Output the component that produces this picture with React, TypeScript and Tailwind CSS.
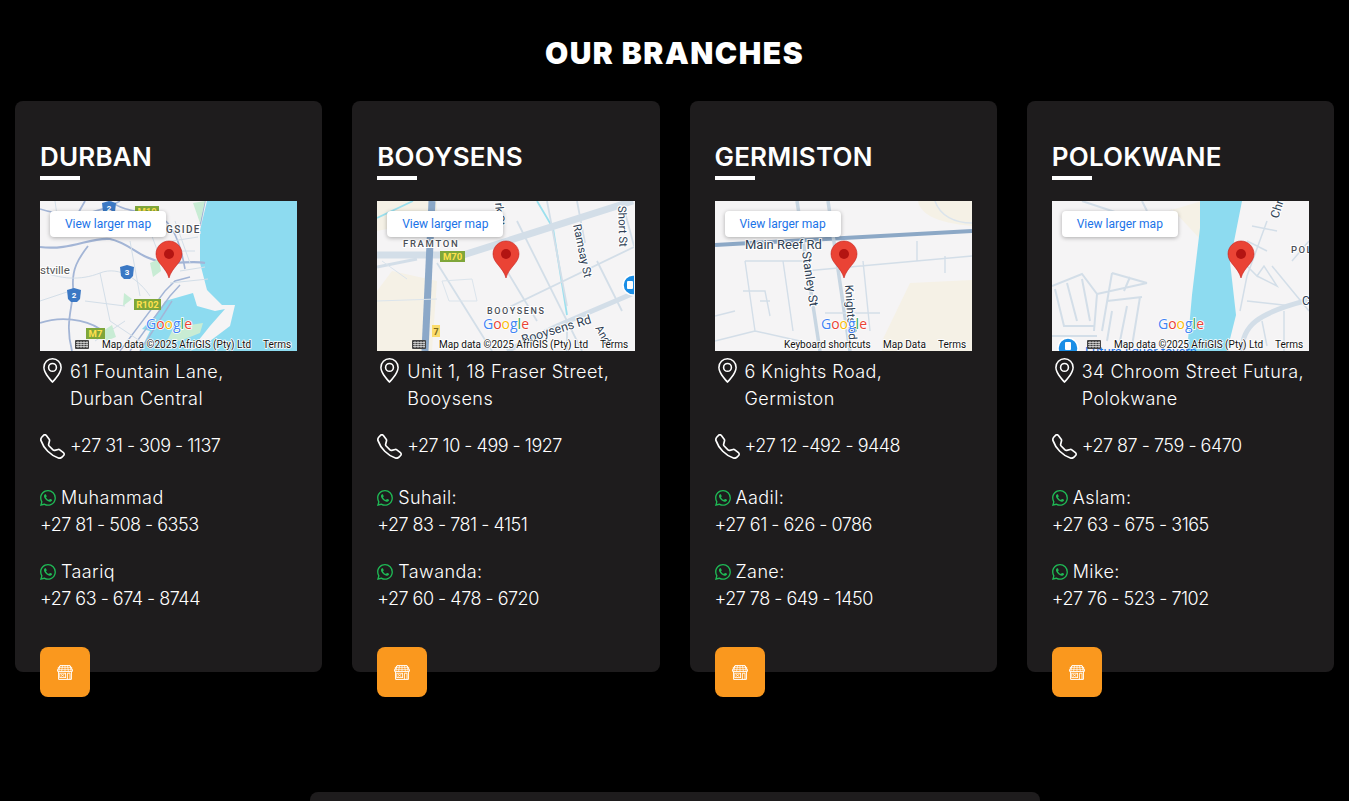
import React from 'react';
import { BsGeoAlt, BsTelephone, BsWhatsapp } from 'react-icons/bs';

const ROAD = '#a3b5d6';
const MINOR = '#d3dee8';
const WATER = '#8ddbf0';
const LAND = '#f5f4f5';
const TAN = '#f5f1e6';

const Label = ({ x, y, size = 10, fill = '#4a4f57', rotate, spacing, weight = 400, children }: any) => (
  <text
    x={x}
    y={y}
    fontSize={size}
    fill={fill}
    fontFamily="Roboto, sans-serif"
    fontWeight={weight}
    letterSpacing={spacing}
    stroke="#ffffff"
    strokeWidth={2}
    paintOrder="stroke"
    transform={rotate ? `rotate(${rotate} ${x} ${y})` : undefined}
  >
    {children}
  </text>
);

const Shield = ({ x, y, w, label, bg = '#7fa63a', fg = '#ffe14d' }: any) => (
  <g>
    <rect x={x} y={y} width={w} height={11} fill={bg} />
    <text x={x + w / 2} y={y + 9} fontSize={9.5} fontWeight={700} textAnchor="middle" fill={fg} fontFamily="Roboto, sans-serif">
      {label}
    </text>
  </g>
);

const RouteBadge = ({ x, y, label }: any) => (
  <g>
    <path d={`M${x - 7} ${y - 5}L${x} ${y - 7}L${x + 7} ${y - 5}L${x + 6} ${y + 4}L${x + 3} ${y + 7}H${x - 3}L${x - 6} ${y + 4}Z`} fill="#3b78c4" />
    <text x={x} y={y + 3} fontSize={8} fontWeight={700} textAnchor="middle" fill="#fff" fontFamily="Roboto, sans-serif">
      {label}
    </text>
  </g>
);

const Pin = ({ x }: { x: number }) => (
  <g transform={`translate(${x - 13} 40)`}>
    <path d="M13 0C5.8 0 0 5.8 0 13C0 22 10 26 13 37C16 26 26 22 26 13C26 5.8 20.2 0 13 0Z" fill="#ea4335" stroke="#c5221f" strokeWidth="0.6" />
    <circle cx="13" cy="13" r="5" fill="#b31412" />
  </g>
);

const GoogleMark = ({ x }: { x: number }) => (
  <text x={x} y={128} fontSize={14} fontWeight={500} textAnchor="middle" fontFamily="'Open Sans', sans-serif" stroke="#ffffff" strokeWidth={1.5} paintOrder="stroke">
    <tspan fill="#4285f4">G</tspan>
    <tspan fill="#ea4335">o</tspan>
    <tspan fill="#fbbc05">o</tspan>
    <tspan fill="#4285f4">g</tspan>
    <tspan fill="#34a853">l</tspan>
    <tspan fill="#ea4335">e</tspan>
  </text>
);

const Keyboard = () => (
  <g>
    <rect x="35" y="139" width="14" height="9" rx="1" fill="#444" />
    <path d="M36 141.5H48M36 143.5H48M36 145.5H48M38 140V147M41 140V147M44 140V147M47 140V147" stroke="#fff" strokeWidth="0.6" />
  </g>
);

const Attribution = ({ variant = 'data' }: { variant?: 'data' | 'short' }) => {
  const small = { fontSize: 10, fill: '#111', fontFamily: 'Roboto, sans-serif', stroke: '#ffffff', strokeWidth: 1.5, paintOrder: 'stroke' } as any;
  if (variant === 'short') {
    return (
      <g>
        <text x="69" y="147" {...small}>Keyboard shortcuts</text>
        <text x="168" y="147" {...small}>Map Data</text>
        <text x="223" y="147" {...small}>Terms</text>
      </g>
    );
  }
  return (
    <g>
      <Keyboard />
      <text x="62" y="147" {...small}>Map data ©2025 AfriGIS (Pty) Ltd</text>
      <text x="223" y="147" {...small}>Terms</text>
    </g>
  );
};

const DurbanMap = () => (
  <>
    <path d="M167 0L160 29L160 62L167 89L182 104L195 104L190 125L170 140L150 150H257V0Z" fill={WATER} />
    <path d="M125 100L153 92L157 105L175 110L185 108L170 125L150 150H100L110 130L102 128L118 112Z" fill={WATER} />
    <path d="M133 128L150 124L163 122L160 132L140 140L128 138Z" fill="#c8ecd4" />
    <path d="M70 0C85 12 105 10 120 16C132 22 140 40 145 68M0 8C30 18 60 12 80 0" fill="none" stroke={ROAD} strokeWidth="1.6" />
    <path d="M0 46C30 50 50 36 70 38C90 42 100 58 125 62C145 62 155 60 165 62" fill="none" stroke={ROAD} strokeWidth="2.2" />
    <path d="M45 0L28 30M48 45C38 58 32 68 33 85C34 105 24 120 32 150M0 122C20 115 45 118 60 128" fill="none" stroke={ROAD} strokeWidth="1.8" />
    <path d="M80 150L125 90L135 80L150 76M90 150L130 95L140 84M100 150L132 100M165 0L160 25" fill="none" stroke={ROAD} strokeWidth="1.4" />
    <path d="M0 70C20 78 40 80 60 72C80 64 100 80 110 95M60 72L70 120L100 140M15 0L20 36M90 40L100 95M110 30L125 70M135 20L150 62M140 70L165 66M130 82L168 78M0 100L30 90M45 100L85 105M55 140L85 120M132 40L158 36M128 50L155 50" fill="none" stroke={MINOR} strokeWidth="1" />
    <path d="M153 2L165 0L160 22ZM110 62L119 58L121 70L113 76ZM84 92L92 98L83 105ZM63 130L72 124L76 136L66 140Z" fill="#c8ecd4" />
    <Shield x={95} y={5} w={24} label="M19" />
    <RouteBadge x={69} y={7} label="2" />
    <RouteBadge x={87} y={71} label="3" />
    <RouteBadge x={34} y={94} label="2" />
    <Shield x={94} y={98} w={27} label="R102" />
    <Shield x={46} y={127} w={19} label="M7" />
    <Label x={126} y={32} size={10} spacing={1.4} weight={500}>GSIDE</Label>
    <Label x={0} y={73} size={11.5} fill="#555">stville</Label>
    <GoogleMark x={129} />
    <Attribution />
  </>
);

const BooysensMap = () => (
  <>
    <path d="M0 0H60V18L0 30Z" fill={TAN} />
    <path d="M0 90L15 70L60 80L55 150H0Z" fill={TAN} />
    <path d="M0 17L36 0M160 0L176 27L190 114" fill="none" stroke="#9be0ee" strokeWidth="1.8" />
    <path d="M0 54H86L256 0" fill="none" stroke={MINOR} strokeWidth="7" />
    <path d="M0 66L40 58" fill="none" stroke={MINOR} strokeWidth="3" />
    <path d="M55 0L48 150" fill="none" stroke="#8ba8c8" strokeWidth="7" />
    <path d="M60 62L115 150M130 70L160 120M140 20L205 150M170 0L190 105M120 112L257 46M190 150V130M220 60L245 110M200 0L208 42M245 0L257 45" fill="none" stroke={MINOR} strokeWidth="1.8" />
    <path d="M130 150L180 125L257 92" fill="none" stroke={MINOR} strokeWidth="5" />
    <path d="M65 80L95 78L100 100H72ZM5 60L30 78M0 100L60 98" fill="none" stroke="#dbe4ec" strokeWidth="1" />
    <Shield x={63} y={50} w={25} label="M70" />
    <rect x="55" y="124" width="8" height="12" fill="#fbdc6c" />
    <text x="59" y="134" fontSize="9" fontWeight={700} textAnchor="middle" fill="#7a6a1c" fontFamily="Roboto, sans-serif">7</text>
    <Label x={26} y={46} size={9.5} spacing={1.7} weight={500}>FRAMTON</Label>
    <Label x={110} y={113} size={9} spacing={1.6} weight={500}>BOOYSENS</Label>
    <Label x={146} y={143} size={12.5} rotate={-17} fill="#2f3f55">Booysens Rd</Label>
    <Label x={196} y={24} size={11.5} rotate={78} fill="#2f3f55">Ramsay St</Label>
    <Label x={241} y={5} size={11.5} rotate={88} fill="#2f3f55">Short St</Label>
    <Label x={118} y={2} size={11.5} rotate={85} fill="#2f3f55">rk St</Label>
    <Label x={218} y={127} size={11} rotate={60} fill="#2f3f55">Andr</Label>
    <circle cx="256" cy="84" r="10" fill="#1a8ee6" stroke="#fff" strokeWidth="1.5" />
    <rect x="250" y="80" width="6" height="8" rx="1" fill="#fff" />
    <GoogleMark x={129} />
    <Attribution />
  </>
);

const GermistonMap = () => (
  <>
    <path d="M203 0C205 12 220 22 257 25V0Z" fill={TAN} />
    <path d="M167 150V140L195 82L257 79V150Z" fill={TAN} />
    <path d="M0 44L257 30" fill="none" stroke="#8ca8c6" strokeWidth="4" />
    <path d="M82 0L105 150M113 0L135 150" fill="none" stroke="#c8d6e2" strokeWidth="3.5" />
    <path d="M30 60H90M90 70L257 55M202 40V60M230 55V72M30 60L40 130M68 60L78 130M28 90H50L55 115M45 100H55M40 130L85 140M0 115L20 110M0 140L40 130M110 112H165M148 60L155 130" fill="none" stroke={MINOR} strokeWidth="1.4" />
    <path d="M220 0C225 15 240 22 257 22" fill="none" stroke="#dbe4ec" strokeWidth="1.5" />
    <Label x={30} y={48} size={13} fill="#2f3f55">Main Reef Rd</Label>
    <Label x={87} y={51} size={12.5} rotate={82} fill="#2f3f55">Stanley St</Label>
    <Label x={130} y={84} size={11.5} rotate={86} fill="#2f3f55">Knights Rd</Label>
    <GoogleMark x={129} />
    <Attribution variant="short" />
  </>
);

const PolokwaneMap = () => (
  <>
    <path d="M116 10L150 0V40L120 8Z" fill={TAN} />
    <path d="M148 0H190L178 61L184 114L175 150H135L140 94L148 27Z" fill={WATER} />
    <path d="M190 150C190 125 205 112 257 99" fill="none" stroke={MINOR} strokeWidth="5" />
    <path d="M215 20L195 75L188 110M220 65L257 110M195 40L215 50M200 25L225 30M190 60L205 75L212 65L225 85L205 75M195 100L240 105M232 110V150M210 120L215 145M257 40L240 60" fill="none" stroke={MINOR} strokeWidth="1.5" />
    <path d="M0 85L30 73L45 93L42 130M3 88L12 125H42M15 82L25 120M30 78L38 120M45 93L95 82M60 72L50 130M60 72L95 82M78 76L72 90M55 100L90 96M60 110L55 140M75 105L68 140M88 96L80 145M0 135H45M30 0L75 15M90 0L95 10" fill="none" stroke={MINOR} strokeWidth="2" />
    <Label x={226} y={18} size={12} rotate={-72} fill="#2f3f55">Chro</Label>
    <Label x={239} y={52} size={9.5} spacing={1.5} weight={500}>POL</Label>
    <Label x={250} y={104} size={12} fill="#2f3f55">C</Label>
    <circle cx="16" cy="147" r="10" fill="#1a8ee6" stroke="#fff" strokeWidth="1.5" />
    <rect x="13" y="141" width="6" height="8" rx="1" fill="#fff" />
    <text x="33" y="155" fontSize="13" fill="#1a73e8" fontFamily="Roboto, sans-serif">Futura liquor tavern</text>
    <GoogleMark x={129} />
    <Attribution />
  </>
);

const BRANCHES = [
  {
    name: 'DURBAN',
    address: ['61 Fountain Lane,', 'Durban Central'],
    phone: '+27 31 - 309 - 1137',
    contacts: [
      { name: 'Muhammad', phone: '+27 81 - 508 - 6353' },
      { name: 'Taariq', phone: '+27 63 - 674 - 8744' },
    ],
    map: <DurbanMap />,
  },
  {
    name: 'BOOYSENS',
    address: ['Unit 1, 18 Fraser Street,', 'Booysens'],
    phone: '+27 10 - 499 - 1927',
    contacts: [
      { name: 'Suhail:', phone: '+27 83 - 781 - 4151' },
      { name: 'Tawanda:', phone: '+27 60 - 478 - 6720' },
    ],
    map: <BooysensMap />,
  },
  {
    name: 'GERMISTON',
    address: ['6 Knights Road,', 'Germiston'],
    phone: '+27 12 -492 - 9448',
    contacts: [
      { name: 'Aadil:', phone: '+27 61 - 626 - 0786' },
      { name: 'Zane:', phone: '+27 78 - 649 - 1450' },
    ],
    map: <GermistonMap />,
  },
  {
    name: 'POLOKWANE',
    address: ['34 Chroom Street Futura,', 'Polokwane'],
    phone: '+27 87 - 759 - 6470',
    contacts: [
      { name: 'Aslam:', phone: '+27 63 - 675 - 3165' },
      { name: 'Mike:', phone: '+27 76 - 523 - 7102' },
    ],
    map: <PolokwaneMap />,
  },
];

const StoreIcon = () => (
  <svg width="16" height="15" viewBox="0 0 16 15" fill="none" stroke="#fff" strokeWidth="1">
    <path d="M3 .6H13L15.4 4.8V6.4H.6V4.8Z" fill="#fa981e" />
    <path d="M.8 2.4H15.2M.6 4.4H15.4M5.5 .6L4.6 6.4M10.5 .6L11.4 6.4M8 .6V6.4M3 .6L1.8 6.4M13 .6L14.2 6.4" strokeWidth="0.7" />
    <path d="M1.6 6.6V14.4H14.4V6.6" />
    <rect x="2.8" y="8.2" width="5.8" height="4.4" strokeWidth="0.8" />
    <path d="M4 11.5L7.5 9M4 9.2L7.4 11.8" strokeWidth="0.7" />
    <path d="M10.4 14V8.2H13V14" strokeWidth="0.9" />
  </svg>
);

const BranchCard = ({ branch, pinX }: { branch: (typeof BRANCHES)[number]; pinX: number }) => (
  <div className="h-[571px] rounded-lg bg-[#1e1c1d] px-[25px] pt-[38px] font-[Inter,sans-serif] text-white">
    <h3 className="text-[26px] leading-[36px] font-semibold tracking-[0.2px]">{branch.name}</h3>
    <div className="mt-px mb-[21px] h-1 w-10 bg-white" />

    <div className="relative h-[150px] w-full overflow-hidden bg-[#f5f4f5]">
      <svg viewBox="0 0 257 150" className="block h-[150px] w-[257px]" style={{ background: LAND }}>
        {branch.map}
        <Pin x={pinX} />
      </svg>
      <div className="absolute top-[10px] left-[10px] flex h-[26px] w-[116px] items-center justify-center rounded-sm bg-white font-[Roboto,sans-serif] text-[12px] text-[#1a73e8] shadow-[0_1px_4px_rgba(0,0,0,0.3)]">
        View larger map
      </div>
    </div>

    <div className="mt-[7px] flex gap-[5px] text-[18px] leading-[27px] font-light tracking-[0.45px]">
      <BsGeoAlt className="h-[25px] w-[25px] shrink-0" />
      <p>
        {branch.address[0]}
        <br />
        {branch.address[1]}
      </p>
    </div>

    <div className="mt-5 flex items-center gap-[5px] text-[18px] leading-[28px] font-light tracking-[-0.5px]">
      <BsTelephone className="h-[25px] w-[25px] shrink-0" />
      <span>{branch.phone}</span>
    </div>

    <div className="mt-6 flex flex-col gap-5 text-[18px] leading-[27px] font-light">
      {branch.contacts.map((contact) => (
        <div key={contact.name}>
          <div className="flex items-center gap-[5px] tracking-[0.4px]">
            <BsWhatsapp className="h-4 w-4 shrink-0 text-[#1fb955]" />
            <span>{contact.name}</span>
          </div>
          <div className="tracking-[-0.5px]">{contact.phone}</div>
        </div>
      ))}
    </div>

    <button className="mt-[35px] flex h-[50px] w-[50px] items-center justify-center rounded-lg bg-[#fa981e]">
      <StoreIcon />
    </button>
  </div>
);

const PIN_X = [129, 129, 129, 189];

export default function App() {
  return (
    <div className="h-[801px] overflow-hidden bg-black">
      <h2 className="pt-[34px] pb-[29px] text-center font-[Inter,sans-serif] text-[30px] leading-[38px] font-black tracking-[1.5px] text-white">
        OUR BRANCHES
      </h2>
      <div className="grid grid-cols-4 gap-[30px] px-[15px]">
        {BRANCHES.map((branch, i) => (
          <BranchCard key={branch.name} branch={branch} pinX={PIN_X[i]} />
        ))}
      </div>
      <div className="mx-auto mt-[120px] h-10 w-[730px] rounded-lg bg-[#1e1c1d]" />
    </div>
  );
}
